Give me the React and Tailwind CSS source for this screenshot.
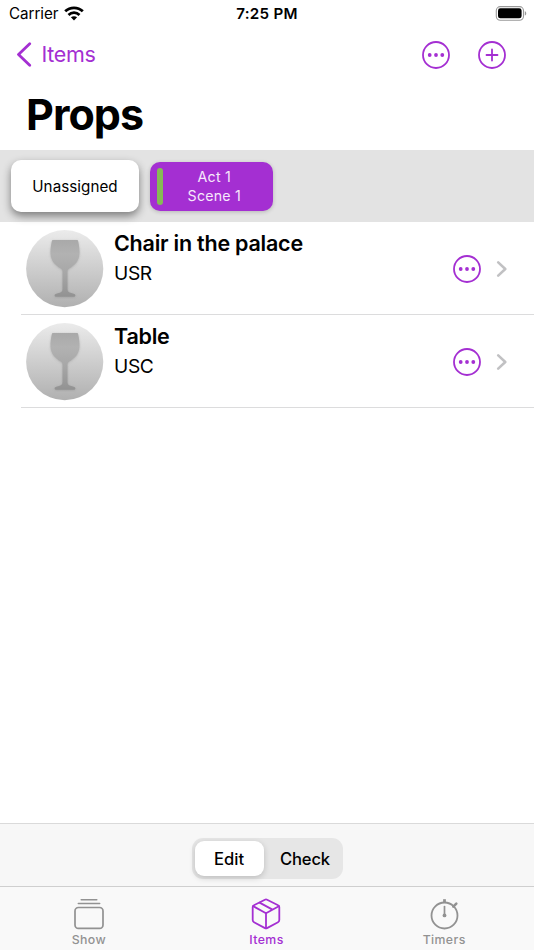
import React, { useState } from 'react';

const SCENES = [
  { id: 1, act: 'Act 1', scene: 'Scene 1' },
];

const PROPS = [
  { id: 1, name: 'Chair in the palace', location: 'USR' },
  { id: 2, name: 'Table', location: 'USC' },
];

function WifiIcon() {
  return (
    <svg width="20" height="15" viewBox="0 0 20 15" fill="none" stroke="#000" strokeWidth="2.8">
      <path d="M1.2 5.3C6.1 .6 13.9 .6 18.8 5.3" />
      <path d="M4.5 8.9c3.1-2.900 7.900-2.900 11 0" />
      <path d="M10 14.400 6.900 11.300c1.800-1.500 4.400-1.500 6.200 0z" fill="#000" stroke="none" />
    </svg>
  );
}

function BatteryIcon() {
  return (
    <svg width="32" height="15" viewBox="0 0 32 15" fill="none">
      <rect x="1.3" y=".6" width="27.2" height="13.6" rx="4" stroke="#999" strokeWidth="1.1" />
      <rect x="3" y="2.3" width="23.6" height="10" rx="2.4" fill="#000" />
      <path d="M29.8 5.2c1.900.6 1.900 3.800 0 4.400z" fill="#999" />
    </svg>
  );
}

function MoreIcon() {
  return (
    <svg width="28" height="28" viewBox="0 0 28 28" fill="#a42fd2">
      <circle cx="14" cy="14" r="13" fill="none" stroke="#a42fd2" strokeWidth="1.8" />
      <circle cx="7.7" cy="14" r="1.9" />
      <circle cx="14" cy="14" r="1.9" />
      <circle cx="20.3" cy="14" r="1.9" />
    </svg>
  );
}

function AddIcon() {
  return (
    <svg width="28" height="28" viewBox="0 0 28 28" fill="none" stroke="#a42fd2" strokeWidth="1.8" strokeLinecap="round">
      <circle cx="14" cy="14" r="13" />
      <path d="M8.500 14h11M14 8.500v11" />
    </svg>
  );
}

function GobletAvatar({ id }) {
  return (
    <svg className="shrink-0" width="78" height="78" viewBox="0 0 78 78">
      <defs>
        <linearGradient id={`disc-${id}`} x1="0" y1="0" x2="0" y2="1">
          <stop offset="0" stopColor="#ebebeb" />
          <stop offset="1" stopColor="#b0b0b0" />
        </linearGradient>
        <linearGradient id={`glass-${id}`} x1="0" y1="0" x2="0" y2="1">
          <stop offset="0" stopColor="#a9a9a9" />
          <stop offset=".25" stopColor="#b2b2b2" />
          <stop offset=".6" stopColor="#a6a6a6" />
          <stop offset="1" stopColor="#929292" />
        </linearGradient>
        <filter id={`soft-${id}`} x="-20%" y="-20%" width="140%" height="140%">
          <feDropShadow dx="0" dy="0.6" stdDeviation="1" floodColor="#777" floodOpacity=".35" />
        </filter>
      </defs>
      <circle cx="38.700" cy="38.700" r="38.600" fill={`url(#disc-${id})`} />
      <path
        filter={`url(#soft-${id})`}
        fill={`url(#glass-${id})`}
        d="M27.300 10h23.400c.9 0 1.200.3 1.400 1.100 1 4.400 1.600 8.700 1.400 12.600-.4 7.500-5.200 12-10.200 14.800-1.400.8-1.800 1.800-1.800 3.400v17c0 2.600 1.300 3.600 3.600 4.100 2.800.5 4.300 1 4.300 2.500 0 .9-.7 1.300-1.800 1.300H30.400c-1.100 0-1.800-.4-1.800-1.300 0-1.500 1.500-2 4.300-2.500 2.300-.5 3.600-1.500 3.600-4.100v-17c0-1.600-.4-2.600-1.800-3.400-5-2.800-9.800-7.300-10.200-14.800-.2-3.900.4-8.200 1.400-12.600.2-.8.5-1.100 1.400-1.100z"
      />
    </svg>
  );
}

function ShowIcon() {
  return (
    <svg width="32" height="32" viewBox="0 0 32 32" fill="none" stroke="#929292" strokeLinecap="round">
      <rect x="2" y="9.500" width="28" height="20.800" rx="3.400" strokeWidth="1.700" />
      <path d="M5.300 5.600h21.400M8.200 1.700h15.600" strokeWidth="1.500" />
    </svg>
  );
}

function BoxIcon() {
  return (
    <svg width="30" height="32" viewBox="0 0 30 32" fill="none" stroke="#a42fd2" strokeWidth="1.800" strokeLinejoin="round" strokeLinecap="round">
      <path d="M13.900 1.700a2.400 2.400 0 0 1 2.200 0l11 5.600a2 2 0 0 1 1.200 1.900v12.900a2.400 2.400 0 0 1-1.300 2.100L16 30.100a2.200 2.200 0 0 1-2 0L3 24.200a2.400 2.400 0 0 1-1.300-2.100V9.200a2 2 0 0 1 1.200-1.900z" />
      <path d="M2.200 8.200 15 15.300l12.800-7.100M15 15.300v14.800M8.600 4.600l12.900 7" />
    </svg>
  );
}

function TimerIcon() {
  return (
    <svg width="32" height="32" viewBox="0 0 32 32" fill="none" stroke="#929292">
      <circle cx="16.500" cy="17.500" r="13" strokeWidth="1.800" />
      <path d="M16.500 4.500V1.200" strokeWidth="2.800" />
      <path d="m25.300 8.700 3-3" strokeWidth="2.600" strokeLinecap="round" />
      <path d="M16.500 8.600v8" strokeWidth="1.700" strokeLinecap="round" />
      <circle cx="16.500" cy="17.400" r="1.900" fill="#929292" stroke="none" />
    </svg>
  );
}

const TABS = [
  { id: 'show', label: 'Show', Icon: ShowIcon },
  { id: 'items', label: 'Items', Icon: BoxIcon },
  { id: 'timers', label: 'Timers', Icon: TimerIcon },
];

function StatusBar() {
  return (
    <div className="grid h-7 grid-cols-3 items-center pl-[9px] pr-[7px] text-[15.200px]">
      <div className="flex items-center gap-[6px]">
        <span className="tracking-[-0.050px]">Carrier</span>
        <WifiIcon />
      </div>
      <span className="pr-[2px] text-center font-semibold tracking-[0.250px]">7:25 PM</span>
      <div className="flex justify-end pb-px">
        <BatteryIcon />
      </div>
    </div>
  );
}

function PropRow({ item }) {
  return (
    <li className="flex h-[93px] pl-[21px]">
      <div className="flex flex-1 border-b border-[#dcdcdd] pl-[5px] pr-[26px]">
        <div className="pt-[8px]">
          <GobletAvatar id={item.id} />
        </div>
        <div className="flex-1 pl-[10px] pt-[6px]">
          <h2 className="text-[21.500px] leading-[30px] font-semibold tracking-[-0.230px]">{item.name}</h2>
          <p className="text-[19.200px] leading-[30px] tracking-[-0.400px]">{item.location}</p>
        </div>
        <div className="flex items-center gap-[15px] pt-[2px]">
          <button>
            <MoreIcon />
          </button>
          <svg width="12" height="18" viewBox="0 0 12 18" fill="none" stroke="#c1c1c3" strokeWidth="2.600" strokeLinecap="round" strokeLinejoin="round">
            <path d="m2.200 2.400 7.100 6.600-7.100 6.600" />
          </svg>
        </div>
      </div>
    </li>
  );
}

function App() {
  const [mode, setMode] = useState('Edit');
  const [tab, setTab] = useState('items');

  return (
    <div className="flex h-screen flex-col overflow-hidden bg-white font-['Inter',sans-serif] text-black">
      <StatusBar />

      <nav className="flex h-[54px] items-center justify-between pl-4 pr-[28px]">
        <button className="flex items-center gap-[8.500px] text-[21.500px] tracking-[-0.350px] text-[#a42fd2]">
          <svg width="17" height="26" viewBox="0 0 17 26" fill="none" stroke="#a42fd2" strokeWidth="2.800" strokeLinecap="round" strokeLinejoin="round">
            <path d="M13.700 1.700 2.500 12.400 13.700 23.300" />
          </svg>
          <span className="pb-[2px]">Items</span>
        </button>
        <div className="flex gap-7">
          <button><MoreIcon /></button>
          <button><AddIcon /></button>
        </div>
      </nav>

      <h1 className="h-[68px] pl-[26px] text-[43px] leading-[64px] font-bold tracking-[-0.950px]">Props</h1>

      <div className="flex h-[72px] items-center gap-[11px] bg-[#e3e3e3] pl-[11px]">
        <button className="h-[52px] w-[128px] rounded-[10px] bg-white pt-[2px] text-[15.200px] tracking-[0.050px] shadow-[0_4px_8px_rgba(0,0,0,0.450)]">
          Unassigned
        </button>
        {SCENES.map((s) => (
          <button key={s.id} className="flex h-[49px] w-[123px] items-center rounded-[10px] bg-[#a42fd2] pl-[7px] text-[14.200px] leading-[19.500px] text-[#f6e8fb] shadow-[0_1px_4px_rgba(0,0,0,0.200)]">
            <span className="h-[37px] w-[5.500px] rounded-full bg-[#86bb55]" />
            <span className="flex-1 pr-[7px] tracking-[0.200px]">
              {s.act}
              <br />
              {s.scene}
            </span>
          </button>
        ))}
      </div>

      <ul className="flex-1">
        {PROPS.map((item) => (
          <PropRow key={item.id} item={item} />
        ))}
      </ul>

      <div className="flex h-[63px] justify-center border-t border-[#dadada] bg-[#f7f7f7] pt-[14px]">
        <div className="flex h-[41px] w-[151px] rounded-[11px] bg-[#e6e6e6] p-[3px]">
          {['Edit', 'Check'].map((m) => (
            <button
              key={m}
              onClick={() => setMode(m)}
              className={`pt-px text-[16.600px] font-medium ${m === 'Edit' ? 'w-[69px]' : 'flex-1 pl-[7px] tracking-[-0.200px]'} ${
                mode === m ? 'rounded-[9px] bg-white shadow-[0_2px_6px_rgba(0,0,0,0.180)]' : ''
              }`}
            >
              {m}
            </button>
          ))}
        </div>
      </div>

      <footer className="grid h-16 grid-cols-3 border-t border-[#cfcfcf] bg-[#f9f9f9] pr-px">
        {TABS.map(({ id, label, Icon }) => (
          <button
            key={id}
            onClick={() => setTab(id)}
            className={`flex flex-col items-center pt-[11px] text-[12.300px] leading-[20px] font-medium tracking-[0.400px] ${
              tab === id ? 'text-[#a42fd2]' : 'text-[#929292]'
            }`}
          >
            <Icon />
            {label}
          </button>
        ))}
      </footer>
    </div>
  );
}

export default App;
